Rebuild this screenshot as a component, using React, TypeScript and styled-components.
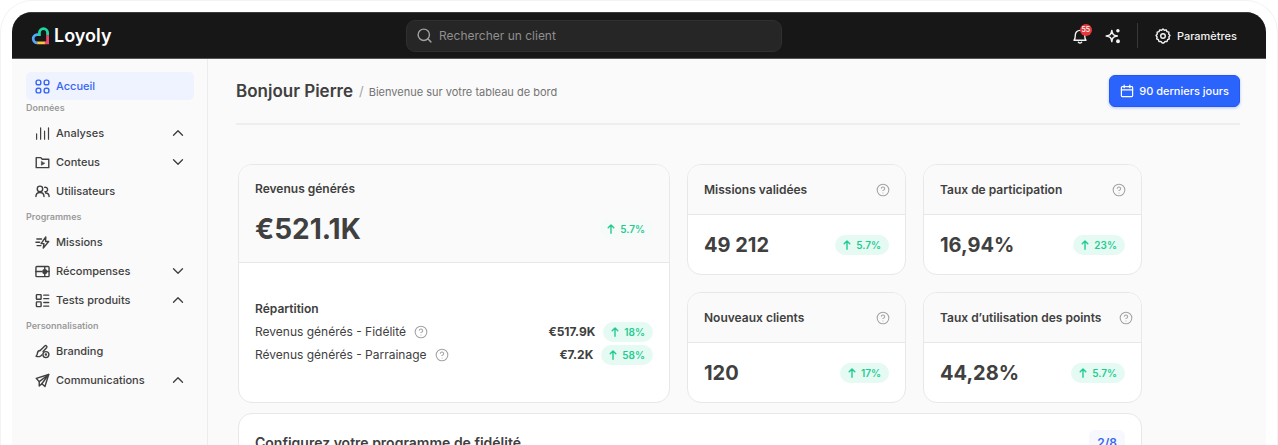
import React from 'react';
import styled, { createGlobalStyle, css } from 'styled-components';
import { ChevronDown, ChevronUp, CircleHelp, Search } from 'lucide-react';

const GlobalStyle = createGlobalStyle`
  *, *::before, *::after { box-sizing: border-box; }
  body {
    margin: 0;
    background: #fff;
    color: #404040;
    font-family: Inter, 'Liberation Sans', sans-serif;
    font-size: 12px;
    line-height: 16px;
  }
  h1, h2, h3, p, ul, dl, dd { margin: 0; padding: 0; }
  button, input { font: inherit; }
`;

const Frame = styled.div`
  height: 100vh;
  overflow: hidden;
  padding: 11px 11px 0;
  border: 1px solid #f3f3f3;
  border-bottom: 0;
  border-radius: 32px 32px 0 0;
`;

const Window = styled.div`
  display: flex;
  flex-direction: column;
  height: 100%;
  overflow: hidden;
  border-radius: 20px 20px 0 0;
  background: #fafafa;
`;

const TopBar = styled.header`
  flex: none;
  display: grid;
  grid-template-columns: 376fr 376fr 455fr;
  align-items: center;
  height: 47px;
  padding: 0 29px 0 18px;
  background: #171717;
  border-top: 1px solid #3c3c3c;
  border-bottom: 1px solid #555;
`;

const Brand = styled.a`
  display: flex;
  align-items: center;
  gap: 4px;
  color: #fff;
  font-size: 18px;
  font-weight: 600;
  line-height: 24px;
  text-decoration: none;
`;

const SearchBox = styled.label`
  display: flex;
  align-items: center;
  gap: 6px;
  height: 32px;
  padding: 0 9px;
  border: 1px solid #303030;
  border-radius: 9px;
  background: #262626;
  color: #a0a0a0;
`;

const SearchInput = styled.input`
  flex: 1;
  min-width: 0;
  padding: 0;
  border: 0;
  outline: 0;
  background: transparent;
  color: #fff;
  font-size: 12px;
  &::placeholder { color: #8f8f8f; opacity: 1; }
`;

const Tools = styled.div`
  display: flex;
  align-items: center;
  justify-content: flex-end;
  color: #f2f2f2;
`;

const ToolButton = styled.button`
  position: relative;
  display: flex;
  align-items: center;
  gap: 6px;
  margin: 0 0 0 17px;
  padding: 0;
  border: 0;
  background: none;
  color: inherit;
  font-size: 11px;
  font-weight: 500;
`;

const Badge = styled.span`
  position: absolute;
  top: -4px;
  right: -4px;
  width: 12px;
  height: 12px;
  border-radius: 50%;
  background: #e5383b;
  color: #fff;
  font-size: 7px;
  font-weight: 500;
  line-height: 12px;
  text-align: center;
`;

const Rule = styled.span`
  width: 1px;
  height: 25px;
  margin-left: 16px;
  background: #383838;
`;

const Body = styled.div`
  flex: 1;
  display: flex;
  min-height: 0;
`;

const Sidebar = styled.nav`
  flex: none;
  display: flex;
  flex-direction: column;
  width: 196px;
  padding: 13px 13px 13px 14px;
  border-right: 1px solid #ececec;
`;

const NavSections = styled.div`
  display: flex;
  flex-direction: column;
  gap: 4px;
`;

const SectionLabel = styled.h2`
  margin-bottom: 3px;
  color: #9b9b9b;
  font-size: 9px;
  font-weight: 600;
  line-height: 16px;
`;

const NavList = styled.ul`
  display: flex;
  flex-direction: column;
  gap: 1px;
  list-style: none;
`;

const NavLink = styled.a<{ $active?: boolean }>`
  display: flex;
  align-items: center;
  gap: 6px;
  height: 28px;
  padding: 0 7px 0 9px;
  border-radius: 5px;
  color: #404040;
  font-size: 11px;
  font-weight: 500;
  text-decoration: none;
  ${p => p.$active && css`
    background: #eef3ff;
    color: #3566f5;
  `}
`;

const NavText = styled.span`
  flex: 1;
`;

const Main = styled.main`
  flex: 1;
  min-width: 0;
  overflow: hidden;
  padding: 0 26px 0 28px;
`;

const PageHead = styled.div`
  display: flex;
  align-items: center;
  gap: 6px;
  height: 66px;
  border-bottom: 2px solid #eee;
`;

const PageTitle = styled.h1`
  font-size: 17px;
  font-weight: 600;
  line-height: 24px;
`;

const Subtitle = styled.p`
  flex: 1;
  color: #737373;
  font-size: 11px;
  & > span { margin-right: 5px; color: #a3a3a3; font-size: 13px; }
`;

const PeriodButton = styled.button`
  display: flex;
  align-items: center;
  gap: 5px;
  height: 32px;
  padding: 0 10px;
  border: 1px solid #2458f0;
  border-radius: 6px;
  background: #2b63fd;
  box-shadow: 0 1px 3px rgba(43, 99, 253, 0.35);
  color: #fff;
  font-size: 11px;
  font-weight: 500;
`;

const Dashboard = styled.div`
  display: flex;
  flex-direction: column;
  gap: 10px;
  max-width: 906px;
  padding: 39px 0 0 2px;
`;

const CardGrid = styled.div`
  display: grid;
  grid-template-columns: 432fr 219fr 219fr;
  grid-auto-rows: 111px;
  gap: 17px;
`;

const Card = styled.section<{ $tall?: boolean }>`
  display: flex;
  flex-direction: column;
  overflow: hidden;
  border: 1px solid #e8e8e8;
  border-radius: 14px;
  background: #fff;
  ${p => p.$tall && css`grid-row: span 2;`}
`;

const CardHead = styled.div`
  display: flex;
  align-items: center;
  justify-content: space-between;
  gap: 18px;
  height: 50px;
  padding: 0 15px 0 16px;
  border-bottom: 1px solid #e8e8e8;
  background: #fafafa;
  color: #a3a3a3;
`;

const CardTitle = styled.h3`
  color: #404040;
  font-size: 12px;
  font-weight: 600;
  line-height: 16px;
  white-space: nowrap;
`;

const CardBody = styled.div`
  flex: 1;
  display: flex;
  align-items: center;
  justify-content: space-between;
  padding: 0 16px;
`;

const RevenueHead = styled.div`
  display: flex;
  flex-direction: column;
  gap: 16px;
  height: 98px;
  padding: 16px 16px 0;
  border-bottom: 1px solid #e8e8e8;
  background: #fafafa;
`;

const RevenueTotal = styled.div`
  display: flex;
  align-items: center;
  justify-content: space-between;
`;

const Figure = styled.strong<{ $large?: boolean }>`
  font-size: ${p => (p.$large ? 28 : 20)}px;
  font-weight: 700;
  line-height: 32px;
`;

const Trend = styled.span<{ $plain?: boolean }>`
  display: flex;
  align-items: center;
  gap: 5px;
  height: 20px;
  padding: 0 8px;
  border-radius: 10px;
  background: ${p => (p.$plain ? '#f6fbf9' : '#e6faf4')};
  color: #1fcb8f;
  font-size: 10px;
  font-weight: 600;
`;

const Breakdown = styled.div`
  display: flex;
  flex-direction: column;
  padding: 38px 16px 0;
`;

const BreakdownList = styled.div`
  padding-top: 3px;
`;

const BreakdownRow = styled.div`
  display: flex;
  align-items: center;
  gap: 8px;
  height: 23px;
  color: #a3a3a3;
`;

const BreakdownLabel = styled.span`
  color: #404040;
`;

const BreakdownValue = styled.strong`
  margin-left: auto;
  color: #404040;
  font-weight: 700;
`;

const SetupHead = styled.div`
  display: flex;
  align-items: center;
  justify-content: space-between;
  padding: 16px;
`;

const SetupTitle = styled.h3`
  font-size: 14px;
  font-weight: 600;
  line-height: 24px;
`;

const Progress = styled.span`
  padding: 0 8px;
  border-radius: 6px;
  background: #f6f8fe;
  color: #3566f5;
  font-size: 12px;
  font-weight: 600;
  line-height: 26px;
`;

const SetupBody = styled.div`
  height: 80px;
`;

type GlyphProps = { size?: number; width?: number; children: React.ReactNode };

const Glyph = ({ size = 15, width = 1.3, children }: GlyphProps) => (
  <svg width={size} height={size} viewBox="0 0 16 16" fill="none" stroke="currentColor"
    strokeWidth={width} strokeLinecap="round" strokeLinejoin="round" aria-hidden="true">
    {children}
  </svg>
);

const LogoMark = () => (
  <svg width="20" height="20" viewBox="0 0 20 20" fill="none" strokeWidth="2.8" aria-hidden="true">
    <path d="M7.4 16.8A4.1 4.1 0 0 1 7.2 8.6H9.4" stroke="#54a6f7" />
    <path d="M9.4 10V6.8A4.1 4.1 0 0 1 17.6 6.8V9.5" stroke="#1fd6a2" />
    <path d="M7.2 16.8H15.4" stroke="#fcc53c" />
    <path d="M17.6 9.3V16.8H14.8" stroke="#f0476c" />
  </svg>
);

const icons = {
  home: (
    <Glyph width={1.5}>
      <rect x="1.2" y="1.2" width="5" height="5" rx="2" />
      <rect x="9.8" y="1.2" width="5" height="5" rx="2" />
      <rect x="1.2" y="9.8" width="5" height="5" rx="2" />
      <rect x="9.8" y="9.8" width="5" height="5" rx="2" />
    </Glyph>
  ),
  bars: (
    <Glyph>
      <path d="M1.7 8.5V14M6 2V14M10.2 5.5V14M14.4 2V14" />
    </Glyph>
  ),
  folder: (
    <Glyph width={1.5}>
      <path d="M1.3 13.5V2.8H6.2L7.7 4.5H14.7V13.5Z" />
      <path d="M6.8 7V11L10.2 9Z" fill="currentColor" strokeWidth="0.6" />
    </Glyph>
  ),
  users: (
    <Glyph width={1.5}>
      <circle cx="5.3" cy="5.2" r="2.9" />
      <path d="M1 13.4C1 10.7 2.9 9 5.3 9S9.6 10.7 9.6 13.4" />
      <path d="M10.2 3.6A2.4 2.4 0 1 1 10.6 8.2M11.3 9.6C13.6 9.6 15 11 15 13.4" />
    </Glyph>
  ),
  bolt: (
    <Glyph width={1.5}>
      <path d="M11.5 2L6.5 9.2H9.6L8.8 14L14.6 6.9H11.3Z" />
      <path d="M2 4.2H7M1 7.7H5M2.2 11.3H6.3" />
    </Glyph>
  ),
  reward: (
    <Glyph width={1.5}>
      <rect x="1" y="2.7" width="14" height="10.8" rx="1" />
      <path d="M1 8H7M10.4 3V5M10.4 11V13" />
      <circle cx="10.4" cy="8" r="2" fill="currentColor" />
      <path d="M13 8H15" />
    </Glyph>
  ),
  list: (
    <Glyph width={1.5}>
      <rect x="1.5" y="1.7" width="5" height="5" rx="0.6" />
      <rect x="1.5" y="9.5" width="5" height="5" rx="0.6" />
      <path d="M9.4 2.3H14.6M9.4 6H14.6M9.4 10.2H14.6M9.4 14H14.6" />
    </Glyph>
  ),
  brush: (
    <Glyph width={1.5}>
      <path d="M5.5 7L10.4 2.1C11.6 1 13.5 2.6 12.4 4L8.6 8" />
      <path d="M5.4 7C3.3 7 2.6 8.8 2.5 10.4C2.4 11.5 1.8 12.4 1.1 13C3.4 14 6.2 13.4 7.2 11.6" />
      <circle cx="11.6" cy="11.3" r="3.2" />
      <circle cx="11.6" cy="11.3" r="0.6" />
    </Glyph>
  ),
  plane: (
    <Glyph width={1.5}>
      <path d="M14.6 1.6L1.3 5.7L4.5 9.2V13.9L7.3 11.5L10.6 14.4Z" />
      <path d="M4.5 9.2L14.6 1.6L7.3 11.5" />
    </Glyph>
  ),
};

const BellIcon = () => (
  <Glyph size={16} width={1.4}>
    <path d="M2 12.2H14C13.1 11.2 12.7 10.3 12.7 7.2C12.7 4.4 10.7 2.4 8 2.4S3.3 4.4 3.3 7.2C3.3 10.3 2.9 11.2 2 12.2Z" />
    <path d="M6.4 14.3C7.2 15 8.8 15 9.6 14.3" />
  </Glyph>
);

const SparkIcon = () => (
  <Glyph size={16} width={1.5}>
    <path d="M6.8 2.4C7.2 6.3 8.4 7.5 12.4 8C8.4 8.5 7.2 9.7 6.8 13.6C6.4 9.7 5.2 8.5 1.2 8C5.2 7.5 6.4 6.3 6.8 2.4Z" />
    <circle cx="12.9" cy="2.7" r="1" fill="currentColor" />
    <circle cx="13" cy="13.3" r="1.2" fill="currentColor" />
  </Glyph>
);

const GearIcon = () => (
  <Glyph size={16} width={1.4}>
    <path d="M6.6 2.2L8 1L9.4 2.2L11.2 1.9L12 3.6L13.9 4.1L13.7 6L15 7.4L13.9 9L14.3 10.8L12.6 11.7L12 13.6L10.1 13.5L8.7 15H7.3L5.9 13.5L4 13.6L3.4 11.7L1.7 10.8L2.1 9L1 7.4L2.3 6L2.1 4.1L4 3.6L4.8 1.9Z" />
    <circle cx="8" cy="8" r="2.3" />
  </Glyph>
);

const CalendarIcon = () => (
  <Glyph size={14} width={1.4}>
    <rect x="1.6" y="3" width="12.8" height="11.4" rx="1" />
    <path d="M1.6 6.8H14.4M4.8 1.2V4.2M11.2 1.2V4.2" />
  </Glyph>
);

const ArrowIcon = () => (
  <svg width="8" height="10" viewBox="0 0 8 10" fill="none" stroke="currentColor"
    strokeWidth="1.4" strokeLinecap="round" strokeLinejoin="round" aria-hidden="true">
    <path d="M4 9.2V1M1.2 3.8L4 1L6.8 3.8" />
  </svg>
);

type Item = { label: string; icon: keyof typeof icons; chevron?: 'up' | 'down' };

const sections: { title: string; items: Item[] }[] = [
  {
    title: 'Données',
    items: [
      { label: 'Analyses', icon: 'bars', chevron: 'up' },
      { label: 'Conteus', icon: 'folder', chevron: 'down' },
      { label: 'Utilisateurs', icon: 'users' },
    ],
  },
  {
    title: 'Programmes',
    items: [
      { label: 'Missions', icon: 'bolt' },
      { label: 'Récompenses', icon: 'reward', chevron: 'down' },
      { label: 'Tests produits', icon: 'list', chevron: 'up' },
    ],
  },
  {
    title: 'Personnalisation',
    items: [
      { label: 'Branding', icon: 'brush' },
      { label: 'Communications', icon: 'plane', chevron: 'up' },
    ],
  },
];

const stats = [
  { title: 'Missions validées', value: '49 212', trend: '5.7%' },
  { title: 'Taux de participation', value: '16,94%', trend: '23%' },
  { title: 'Nouveaux clients', value: '120', trend: '17%' },
  { title: 'Taux d’utilisation des points', value: '44,28%', trend: '5.7%' },
];

const breakdown = [
  { label: 'Revenus générés - Fidélité', value: '€517.9K', trend: '18%' },
  { label: 'Révenus générés - Parrainage', value: '€7.2K', trend: '58%' },
];

const HelpGlyph = styled(CircleHelp)`
  flex: none;
`;

const HelpIcon = () => <HelpGlyph size={14} strokeWidth={1.8} aria-hidden="true" />;

const TrendPill = ({ value, plain }: { value: string; plain?: boolean }) => (
  <Trend $plain={plain}>
    <ArrowIcon />
    {value}
  </Trend>
);

const NavItem = ({ item }: { item: Item }) => (
  <li>
    <NavLink href="#">
      {icons[item.icon]}
      <NavText>{item.label}</NavText>
      {item.chevron === 'up' && <ChevronUp size={18} strokeWidth={1.8} aria-hidden="true" />}
      {item.chevron === 'down' && <ChevronDown size={18} strokeWidth={1.8} aria-hidden="true" />}
    </NavLink>
  </li>
);

export default function App() {
  return (
    <>
      <GlobalStyle />
      <Frame>
        <Window>
          <TopBar>
            <Brand href="#">
              <LogoMark />
              Loyoly
            </Brand>
            <SearchBox>
              <Search size={17} aria-hidden="true" />
              <SearchInput type="text" placeholder="Rechercher un client" aria-label="Rechercher un client" />
            </SearchBox>
            <Tools>
              <ToolButton type="button" aria-label="Notifications">
                <BellIcon />
                <Badge>55</Badge>
              </ToolButton>
              <ToolButton type="button" aria-label="Assistant">
                <SparkIcon />
              </ToolButton>
              <Rule />
              <ToolButton type="button">
                <GearIcon />
                Paramètres
              </ToolButton>
            </Tools>
          </TopBar>
          <Body>
            <Sidebar>
              <NavLink href="#" $active>
                {icons.home}
                <NavText>Accueil</NavText>
              </NavLink>
              <NavSections>
                {sections.map(section => (
                  <div key={section.title}>
                    <SectionLabel>{section.title}</SectionLabel>
                    <NavList>
                      {section.items.map(item => <NavItem key={item.label} item={item} />)}
                    </NavList>
                  </div>
                ))}
              </NavSections>
            </Sidebar>
            <Main>
              <PageHead>
                <PageTitle>Bonjour Pierre</PageTitle>
                <Subtitle><span>/</span>Bienvenue sur votre tableau de bord</Subtitle>
                <PeriodButton type="button">
                  <CalendarIcon />
                  90 derniers jours
                </PeriodButton>
              </PageHead>
              <Dashboard>
                <CardGrid>
                  <Card $tall>
                    <RevenueHead>
                      <CardTitle>Revenus générés</CardTitle>
                      <RevenueTotal>
                        <Figure $large>€521.1K</Figure>
                        <TrendPill value="5.7%" plain />
                      </RevenueTotal>
                    </RevenueHead>
                    <Breakdown>
                      <CardTitle>Répartition</CardTitle>
                      <BreakdownList>
                        {breakdown.map(row => (
                          <BreakdownRow key={row.label}>
                            <BreakdownLabel>{row.label}</BreakdownLabel>
                            <HelpIcon />
                            <BreakdownValue>{row.value}</BreakdownValue>
                            <TrendPill value={row.trend} />
                          </BreakdownRow>
                        ))}
                      </BreakdownList>
                    </Breakdown>
                  </Card>
                  {stats.map(stat => (
                    <Card key={stat.title}>
                      <CardHead>
                        <CardTitle>{stat.title}</CardTitle>
                        <HelpIcon />
                      </CardHead>
                      <CardBody>
                        <Figure>{stat.value}</Figure>
                        <TrendPill value={stat.trend} />
                      </CardBody>
                    </Card>
                  ))}
                </CardGrid>
                <Card>
                  <SetupHead>
                    <SetupTitle>Configurez votre programme de fidélité</SetupTitle>
                    <Progress>2/8</Progress>
                  </SetupHead>
                  <SetupBody />
                </Card>
              </Dashboard>
            </Main>
          </Body>
        </Window>
      </Frame>
    </>
  );
}
